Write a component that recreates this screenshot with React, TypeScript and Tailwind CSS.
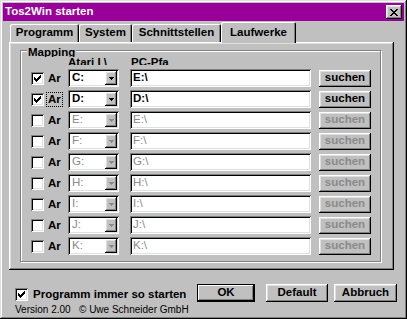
import React from "react";

// classic 3D edges
const raised =
  "shadow-[inset_-1px_-1px_#000,inset_1px_1px_#fff,inset_-2px_-2px_#808080,inset_2px_2px_#dfdfdf]";
const sunken =
  "shadow-[inset_1px_1px_#808080,inset_-1px_-1px_#fff,inset_2px_2px_#000,inset_-2px_-2px_#dfdfdf]";

// small pixel glyph drawn from a text map
function Pix({ map, color }: { map: string[]; color: string }) {
  const w = map[0].length;
  const h = map.length;
  const rects: React.ReactNode[] = [];
  map.forEach((row, y) =>
    row.split("").forEach((c, x) => {
      if (c === "X") rects.push(<rect key={x + "-" + y} x={x} y={y} width={1} height={1} fill={color} />);
    })
  );
  return (
    <svg width={w} height={h} viewBox={`0 0 ${w} ${h}`} shapeRendering="crispEdges">
      {rects}
    </svg>
  );
}

const checkMap = [
  "......X",
  ".....XX",
  "X...XXX",
  "XX.XXX.",
  "XXXXX..",
  ".XXX...",
  "..X....",
];

const closeMap = [
  "XX....XX",
  ".XX..XX.",
  "..XXXX..",
  "...XX...",
  "..XXXX..",
  ".XX..XX.",
  "XX....XX",
];

const arrowMap = ["XXXXX", ".XXX.", "..X.."];

function CheckBox({ checked }: { checked?: boolean }) {
  return (
    <div className={`w-[13px] h-[13px] bg-white shrink-0 flex items-center justify-center ${sunken}`}>
      {checked && <Pix map={checkMap} color="#000" />}
    </div>
  );
}

const rows = [
  { d: "C:", p: "E:\\", on: true },
  { d: "D:", p: "D:\\", on: true, focus: true },
  { d: "E:", p: "E:\\" },
  { d: "F:", p: "F:\\" },
  { d: "G:", p: "G:\\" },
  { d: "H:", p: "H:\\" },
  { d: "I:", p: "I:\\" },
  { d: "J:", p: "J:\\" },
  { d: "K:", p: "K:\\" },
];

function Row({ d, p, on, focus }: { d: string; p: string; on?: boolean; focus?: boolean }) {
  const txt = on ? "text-black" : "text-[#8a8a8a] font-normal";
  return (
    <div className="flex items-center h-[18px]">
      <CheckBox checked={on} />
      <div className="w-[20px] ml-[4px] flex">
        <span className={`leading-[13px] px-px -ml-px ${focus ? "outline outline-1 outline-dotted outline-black" : ""}`}>Ar</span>
      </div>
      {/* drive combo */}
      <div className={`w-[51px] h-[18px] bg-white flex items-center p-[2px] ${sunken}`}>
        <span className={`flex-1 pl-[2px] leading-none ${txt}`}>{d}</span>
        <div className={`w-[12px] h-[14px] bg-[#c0c0c0] flex items-center justify-center ${raised}`}>
          <Pix map={arrowMap} color={on ? "#000" : "#8a8a8a"} />
        </div>
      </div>
      {/* pc path */}
      <div className={`ml-[11px] w-[181px] h-[18px] bg-white flex items-center pl-[3px] ${sunken}`}>
        <span className={`leading-none ${txt}`}>{p}</span>
      </div>
      <button
        className={`ml-[8px] w-[52px] h-[17px] bg-[#c0c0c0] flex items-center justify-center leading-none ${raised} ${
          on ? "text-black" : "text-[#8a8a8a]"
        }`}
      >
        suchen
      </button>
    </div>
  );
}

function Tab({ label, w, active }: { label: string; w: number; active?: boolean }) {
  const base =
    "bg-[#c0c0c0] flex items-center justify-center leading-none rounded-t-[2px] shadow-[inset_1px_1px_#fff,inset_-1px_0_#000,inset_-2px_0_#808080]";
  return active ? (
    <div className={`${base} self-start h-[21px] relative z-10`} style={{ width: w }}>
      {label}
    </div>
  ) : (
    <div className={`${base} self-end h-[18px]`} style={{ width: w }}>
      {label}
    </div>
  );
}

export default function App() {
  return (
    <div
      className={`w-[407px] h-[319px] bg-[#c0c0c0] p-[3px] flex flex-col font-['Liberation_Sans',Arial,sans-serif] text-[11.5px] font-bold text-black shadow-[inset_-1px_-1px_#000,inset_1px_1px_#dfdfdf,inset_-2px_-2px_#808080,inset_2px_2px_#fff]`}
    >
      {/* Title bar */}
      <div className="h-[18px] bg-[#990099] flex items-center justify-between pl-[2px] pr-[2px] shrink-0">
        <span className="text-white leading-none">Tos2Win starten</span>
        <button className={`w-[16px] h-[14px] bg-[#c0c0c0] flex items-center justify-center ${raised}`}>
          <Pix map={closeMap} color="#000" />
        </button>
      </div>

      {/* Tabs */}
      <div className="mt-px h-[20px] flex pl-[7px] shrink-0">
        <Tab label="Programm" w={69} />
        <Tab label="System" w={53} />
        <Tab label="Schnittstellen" w={89} />
        <Tab label="Laufwerke" w={75} active />
      </div>

      {/* Tab panel */}
      <div className={`ml-[6px] w-[385px] h-[228px] shrink-0 pt-[8px] pl-[11px] ${raised}`}>
        <div className="relative w-[361px] h-[212px] border border-[#808080] shadow-[1px_1px_0_#fff,inset_1px_1px_0_#fff]">
          <div className="absolute left-[6px] top-[-4px] h-[10px] overflow-hidden bg-[#c0c0c0] px-px">
            <div className="leading-[13px] -mt-px">Mapping</div>
          </div>

          {/* column heads, cut off by the first row */}
          <div className="h-[14px] overflow-hidden flex pt-[5px] pl-[47px] leading-[13px]">
            <span className="w-[63px]">Atari I \</span>
            <span>PC-Pfa</span>
          </div>

          <div className="mt-[4px] pl-[10px] flex flex-col gap-[3px]">
            {rows.map((r) => (
              <Row key={r.d} {...r} />
            ))}
          </div>
        </div>
      </div>

      {/* Footer */}
      <div className="flex items-start flex-1">
        <div className="pl-[12px] pt-[18px] flex flex-col">
          <div className="flex items-center h-[13px]">
            <CheckBox checked />
            <span className="ml-[5px] leading-none">Programm immer so starten</span>
          </div>
          <div className="mt-[3px] flex text-[10px] font-normal leading-[12px]">
            <span className="w-[64px]">Version 2.00</span>
            <span>© Uwe Schneider GmbH</span>
          </div>
        </div>
        <div className="ml-auto mt-[14px] pr-[7px] flex">
          <button className="w-[58px] h-[18px] bg-[#c0c0c0] leading-none shadow-[inset_0_0_0_1px_#000,inset_-2px_-2px_#000,inset_2px_2px_#fff,inset_-3px_-3px_#808080]">
            OK
          </button>
          <button className={`ml-[11px] w-[62px] h-[18px] bg-[#c0c0c0] leading-none ${raised}`}>Default</button>
          <button className={`ml-[6px] w-[63px] h-[18px] bg-[#c0c0c0] leading-none ${raised}`}>Abbruch</button>
        </div>
      </div>
    </div>
  );
}
